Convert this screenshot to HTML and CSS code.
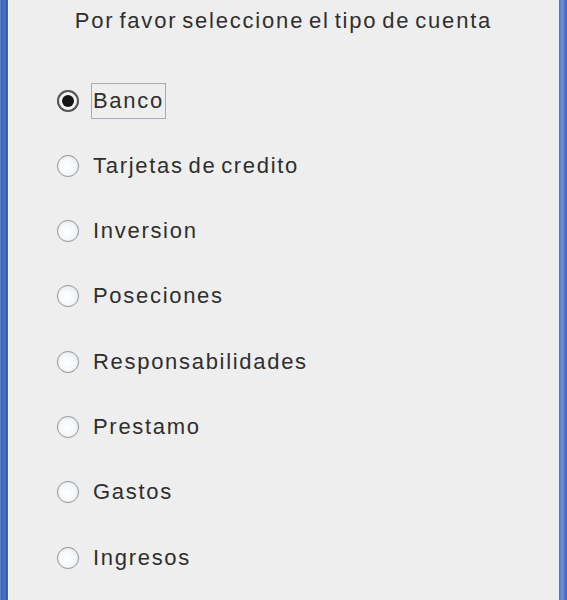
FILE: index.html
```html
<!DOCTYPE html>
<html lang="es">
<head>
    <meta charset="UTF-8">
    <title>Tipo de cuenta</title>
    <link rel="stylesheet" href="styles.css">
</head>
<body>
    <div class="frame">
        <div class="panel">
            <div class="title">Por favor seleccione el tipo de cuenta</div>
            <div class="options">
                <label class="option">
                    <span class="radio checked"></span>
                    <span class="label focus">Banco</span>
                </label>
                <label class="option">
                    <span class="radio"></span>
                    <span class="label">Tarjetas de credito</span>
                </label>
                <label class="option">
                    <span class="radio"></span>
                    <span class="label">Inversion</span>
                </label>
                <label class="option">
                    <span class="radio"></span>
                    <span class="label">Poseciones</span>
                </label>
                <label class="option">
                    <span class="radio"></span>
                    <span class="label">Responsabilidades</span>
                </label>
                <label class="option">
                    <span class="radio"></span>
                    <span class="label">Prestamo</span>
                </label>
                <label class="option">
                    <span class="radio"></span>
                    <span class="label">Gastos</span>
                </label>
                <label class="option">
                    <span class="radio"></span>
                    <span class="label">Ingresos</span>
                </label>
            </div>
        </div>
    </div>
</body>
</html>
```

FILE: styles.css
```css
* {
    margin: 0;
    padding: 0;
    box-sizing: border-box;
}

body {
    background: #4a6fc4;
    width: 567px;
    height: 600px;
    overflow: hidden;
    font-family: 'Liberation Sans', Arial, sans-serif;
}

.frame {
    height: 600px;
    padding: 0 8px 0 8px;
    background: linear-gradient(to right, #7f9fe0 0, #3d62bb 1px, #4a72cc 5px, #2f53a8 7px, #4a72cc 8px, #4a72cc 559px, #6f91dc 562px, #3c5fb5 567px);
}

.panel {
    height: 600px;
    background: #eeeeee;
    border-left: 1px solid #fbfbff;
    border-right: 1px solid #e6f0fa;
    padding-left: 48px;
}

.title {
    color: #2e2e2e;
    font-size: 22px;
    letter-spacing: 1.8px;
    word-spacing: -3px;
    text-align: center;
    margin-left: -57px;
    margin-right: -9px;
    padding-top: 8px;
    height: 83px;
}

.options {
    display: flex;
    flex-direction: column;
    gap: 30.3px;
}

.option {
    display: flex;
    align-items: center;
    gap: 12px;
    height: 35px;
}

.radio {
    width: 22px;
    height: 22px;
    border-radius: 50%;
    border: 1.5px solid #9a9a9a;
    background: radial-gradient(circle at 45% 55%, #ffffff 0, #f6f8fa 45%, #dde2e8 100%);
    box-shadow: 0 0 1px #c8c8c8;
    position: relative;
}

.radio.checked {
    background: #f3f3f3;
    border: 2px solid #555;
}

.radio.checked::after {
    content: "";
    position: absolute;
    left: 3px;
    top: 3px;
    width: 12px;
    height: 12px;
    border-radius: 50%;
    background: #151515;
}

.label {
    color: #2e2e2e;
    font-size: 22px;
    letter-spacing: 1.7px;
    word-spacing: -3px;
    padding: 4px 1px;
    border: 1px solid transparent;
}

.label.focus {
    border-color: #a6abb5;
}
```
